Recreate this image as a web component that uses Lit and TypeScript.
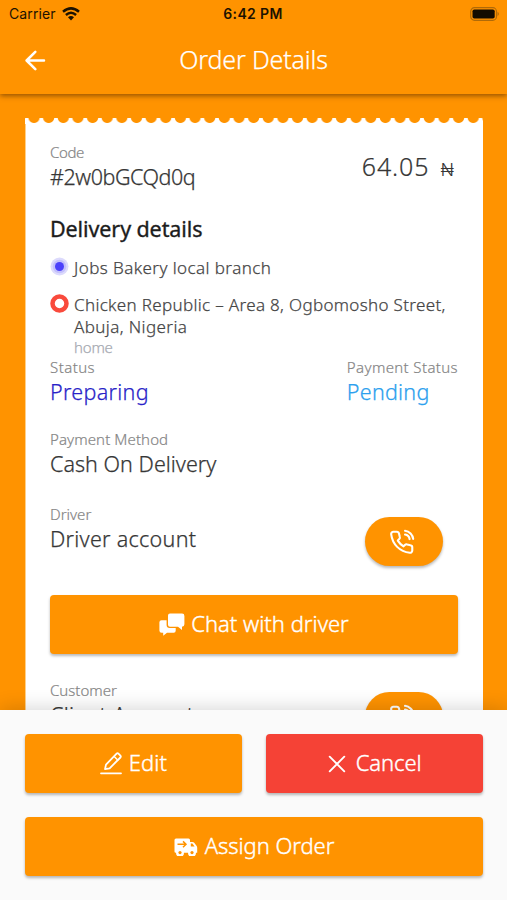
import { LitElement, html, css, nothing, type TemplateResult } from "lit";
import { customElement, property } from "lit/decorators.js";

const chatIcon = html`<svg width="26" height="23" viewBox="0 0 26 23">
  <path fill="#fff" d="M11 0.5h12q2.4 0 2.4 2.4v8.4q0 2.4-2.4 2.4v3.2l-4-3.2H11q-2 0-2-2V2.5q0-2 2-2z"/>
  <path fill="#fff" d="M7.6 7.2H2.5Q0.4 7.2 0.4 9.2v8.3q0 2.2 2.2 2.2h1.6v3l3.8-3h6.7q2 0 2-2v-2.6H10.600q-3 0-3-3z"/>
</svg>`;

const callIcon = html`<svg width="28" height="28" viewBox="0 0 24 24" fill="none" stroke="#fff" stroke-width="1.8" stroke-linecap="round" stroke-linejoin="round">
  <path d="M14.600 5.600a4.600 4.600 0 0 1 3.900 3.900M14.600 2.400a7.800 7.800 0 0 1 7 7"/>
  <path d="M20.800 16.800v2.500a1.900 1.900 0 0 1-2.100 1.900C10 20.300 3.800 14 2.700 5.300a1.900 1.900 0 0 1 1.900-2.100h2.900a1.900 1.900 0 0 1 1.900 1.600l.7 2.700a1.900 1.900 0 0 1-.45 2L8.400 10.800a15 15 0 0 0 4.900 4.900l1.200-1.200a1.900 1.900 0 0 1 2-.45l2.700.7a1.900 1.900 0 0 1 1.600 2.050z"/>
</svg>`;

const editIcon = html`<svg width="22" height="23" viewBox="0 0 22 23" fill="none" stroke="#fff" stroke-width="1.8" stroke-linecap="round" stroke-linejoin="round">
  <path d="M1 21.300h20"/>
  <path d="M5 17.200l1-4.600L16.600 1.700q.9-.9 1.800 0l2 2q.9.9 0 1.800L9.600 16.300z"/>
  <path d="M14.200 4.400l3.500 3.500" stroke-width="1.400"/>
</svg>`;

const closeIcon = html`<svg width="18" height="18" viewBox="0 0 18 18" stroke="#fff" stroke-width="1.9" stroke-linecap="round">
  <path d="M1.700 1.700l14.600 14.600M16.300 1.700L1.700 16.300"/>
</svg>`;

const truckIcon = html`<svg width="24" height="18" viewBox="0 0 24 18">
  <path fill="#fff" d="M2 0.500h12.500q1.500 0 1.500 1.500v2h2.500q1 0 1.700.8l2.300 3q.7.900.7 2v5h-1.200a4 4 0 0 1-8 0H10a4 4 0 0 1-8 0H1.800q-1.300 0-1.300-1.300V2Q0.500.5 2 .5z"/>
  <path fill="none" stroke="#ff9300" stroke-width="1.500" d="M3.500 6.300h8M9 3.400l3 2.900-3 2.900"/>
  <path fill="#ff9300" d="M16.800 5.600h1.600l2.200 3h-3.800z"/>
  <circle cx="6" cy="14.600" r="1.600" fill="#ff9300"/><circle cx="18" cy="14.600" r="1.600" fill="#ff9300"/>
</svg>`;

@customElement("status-bar")
class StatusBar extends LitElement {
  static styles = css`
    :host { display: grid; grid-template-columns: 1fr auto 1fr; align-items: center; height: 27px;
      padding: 0 7px 0 9px; font: 400 14px "Inter", sans-serif; color: #1c1200; }
    .left { display: flex; align-items: center; gap: 6px; letter-spacing: 0.1px; }
    .time { font-weight: 600; letter-spacing: 0.350px; margin-left: -3px; }
    .battery { justify-self: end; }
    svg { display: block; }
  `;
  render() {
    return html`
      <div class="left">Carrier
        <svg width="18" height="14" viewBox="0 0 18 14" fill="none" stroke="#1c1200" stroke-width="2.500">
          <path d="M1 4.800Q9-2 17 4.800"/><path d="M3.900 8Q9 3.600 14.100 8"/>
          <path d="M6 10.200Q9 7.600 12 10.200L9 13.600z" fill="#1c1200" stroke="none"/>
        </svg>
      </div>
      <div class="time">6:42 PM</div>
      <svg class="battery" width="30" height="14" viewBox="0 0 30 14">
        <rect x="0.700" y="0.700" width="25.800" height="12.600" rx="3.800" fill="none" stroke="#b06a08" stroke-width="1.200"/>
        <rect x="2.500" y="2.500" width="22.200" height="9" rx="1.800" fill="#140c00"/>
        <path d="M27.600 4.800q2.400 2.200 0 4.400z" fill="#a86408"/>
      </svg>`;
  }
}

@customElement("app-button")
class AppButton extends LitElement {
  @property() label = "";
  @property({ attribute: false }) icon: TemplateResult | typeof nothing = nothing;
  @property({ type: Boolean, reflect: true }) danger = false;
  @property({ type: Number }) gap = 6;
  @property({ type: Number }) tracking = 0;
  static styles = css`
    :host { display: flex; align-items: center; justify-content: center; height: 58.500px; border-radius: 4px;
      background: #ff9300; color: #fff; box-shadow: 0 2px 3px rgba(0, 0, 0, 0.28); white-space: nowrap; }
    :host([danger]) { background: #f54236; }
    .text { font: 300 22px/30px "Noto Sans", sans-serif; padding-bottom: 3px; -webkit-text-stroke: 0.400px currentColor; }
    svg { display: block; flex: none; margin-top: 1px; }
  `;
  render() {
    return html`${this.icon}<span class="text" style="margin-left:${this.gap}px;letter-spacing:${this.tracking}px">${this.label}</span>`;
  }
}

@customElement("call-button")
class CallButton extends LitElement {
  static styles = css`
    :host { display: flex; align-items: center; justify-content: center; width: 78px; height: 49px;
      border-radius: 25px; background: #ff9300; box-shadow: 0 2px 3px rgba(0, 0, 0, 0.28); }
    svg { display: block; margin-right: 4px; }
  `;
  render() { return callIcon; }
}

@customElement("detail-field")
class DetailField extends LitElement {
  @property() label = "";
  @property() value = "";
  @property() tone = "#363636";
  @property({ type: Number }) lt = 0;
  @property({ type: Number }) vt = 0;
  static styles = css`
    :host { display: block; font-family: "Noto Sans", sans-serif; font-weight: 300; white-space: nowrap; }
    .label { font-size: 15px; line-height: 20px; color: #858585; -webkit-text-stroke: 0.200px currentColor; }
    .value { font-size: 21.500px; line-height: 28px; -webkit-text-stroke: 0.250px currentColor; padding-top: 0.500px; margin-bottom: -0.500px; }
  `;
  render() {
    return html`
      <div class="label" style="letter-spacing:${this.lt}px">${this.label}</div>
      <div class="value" style="color:${this.tone};letter-spacing:${this.vt}px">${this.value}</div>`;
  }
}

@customElement("app-root")
class AppRoot extends LitElement {
  static styles = css`
    :host { display: flex; flex-direction: column; height: 900px; overflow: hidden; background: #ff9300;
      font-family: "Noto Sans", sans-serif; font-weight: 300; color: #363636; }
    .header { flex: none; height: 94px; background: #ff9300; box-shadow: 0 2px 5px rgba(70, 35, 0, 0.550); z-index: 1; }
    .nav { display: grid; grid-template-columns: 62px 1fr 62px; align-items: center; height: 67px; color: #fff; }
    .nav svg { display: block; margin-left: 25px; }
    .title { text-align: center; font-size: 25px; line-height: 34px; letter-spacing: -0.150px; padding-bottom: 4px;
      -webkit-text-stroke: 0.250px currentColor; }
    .content { flex: 1; min-height: 0; overflow: hidden; padding: 24px 24px 0 25px; }
    .teeth { height: 6px; background: radial-gradient(circle at 50% -0.700px, #ff9300 5.200px, #fff 6.100px) 1.700px 0 / 14.645px 6px repeat-x; }
    .card { height: 900px; background: #fff; border-left: 1px solid #ffd08a; box-sizing: border-box;
      padding: 18px 25px 0 24px; }
    .row { display: flex; justify-content: space-between; white-space: nowrap; }
    .price { display: flex; align-items: baseline; gap: 11px; font-size: 25px; line-height: 34px;
      padding: 7px 4px 0 0; letter-spacing: 0.900px; -webkit-text-stroke: 0.200px currentColor; }
    .unit { font: 350 17.500px "Inter", sans-serif; letter-spacing: 0; -webkit-text-stroke: 0; }
    .section { margin-top: 25px; font-size: 21.500px; line-height: 28px; font-weight: 400; color: #1c1c1c;
      letter-spacing: -0.100px; -webkit-text-stroke: 0.350px currentColor; }
    .stop { display: grid; grid-template-columns: 19px 1fr; column-gap: 5px; font-size: 17px; line-height: 22px;
      color: #454545; white-space: nowrap; -webkit-text-stroke: 0.250px currentColor; }
    .stop svg { display: block; }
    .first { margin-top: 14px; }
    .second { margin-top: 15px; }
    .note { font-size: 15px; line-height: 19px; color: #a6aab2; letter-spacing: -0.200px; }
    .gap { margin-top: 24px; }
    .driver { margin-top: 27px; }
    .driver call-button { margin: 13px 15px 0 0; }
    .chat { margin-top: 29px; }
    .customer { margin-top: 26.500px; }
    .customer call-button { margin: 12px 15px 0 0; }
    .footer { flex: none; height: 190px; box-sizing: border-box; padding: 24px 24px 0 25px; background: #fafafa;
      display: grid; grid-template-columns: 1fr 1fr; grid-auto-rows: 58.500px; gap: 24.500px; z-index: 1;
      box-shadow: 0 -2px 18px rgba(0, 0, 0, 0.160); }
    .wide { grid-column: 1 / 3; }
  `;
  render() {
    return html`
      <div class="header">
        <status-bar></status-bar>
        <div class="nav">
          <svg width="21" height="21" viewBox="0 0 21 21" fill="none" stroke="#fff" stroke-width="2.500" stroke-linecap="round" stroke-linejoin="round"><path d="M19 10.500H2M10.300 1.800L1.600 10.500l8.700 8.700"/></svg>
          <div class="title">Order Details</div>
        </div>
      </div>
      <div class="content">
        <div class="teeth"></div>
        <div class="card">
          <div class="row">
            <detail-field label="Code" value="#2w0bGCQd0q" .lt=${-0.4} .vt=${-0.45}></detail-field>
            <div class="price"><span>64.05</span><span class="unit">₦</span></div>
          </div>
          <div class="section">Delivery details</div>
          <div class="stop first">
            <svg width="19" height="19" viewBox="0 0 19 19"><circle cx="9.500" cy="9.500" r="9" fill="#dcdafc"/><circle cx="9.500" cy="9.500" r="6.800" fill="#c3c0fb"/><circle cx="9.500" cy="9.500" r="4.500" fill="#4b40fb"/></svg>
            <div style="letter-spacing:0.420px">Jobs Bakery local branch</div>
          </div>
          <div class="stop second">
            <svg width="19" height="19" viewBox="0 0 19 19"><circle cx="9.500" cy="9.500" r="7" fill="#fff" stroke="#f94a3c" stroke-width="4.500"/></svg>
            <div>
              <div style="letter-spacing:0.330px">Chicken Republic – Area 8, Ogbomosho Street,</div>
              <div style="letter-spacing:0.400px">Abuja, Nigeria</div>
              <div class="note">home</div>
            </div>
          </div>
          <div class="row">
            <detail-field label="Status" value="Preparing" tone="#2a1fc8" .lt=${0.45} .vt=${0.3}></detail-field>
            <detail-field label="Payment Status" value="Pending" tone="#2ca0ee" .lt=${0.37} .vt=${0.25}></detail-field>
          </div>
          <detail-field class="gap" label="Payment Method" value="Cash On Delivery" .lt=${0.1} .vt=${0.03}></detail-field>
          <div class="row driver">
            <detail-field label="Driver" value="Driver account" .vt=${0.28}></detail-field>
            <call-button></call-button>
          </div>
          <app-button class="chat" label="Chat with driver" .icon=${chatIcon} .gap=${6} .tracking=${0}></app-button>
          <div class="row customer">
            <detail-field label="Customer" value="Client Account" .vt=${0.3}></detail-field>
            <call-button></call-button>
          </div>
        </div>
      </div>
      <div class="footer">
        <app-button label="Edit" .icon=${editIcon} .gap=${7} .tracking=${0.1}></app-button>
        <app-button danger label="Cancel" .icon=${closeIcon} .gap=${10} .tracking=${-0.1}></app-button>
        <app-button class="wide" label="Assign Order" .icon=${truckIcon} .gap=${7} .tracking=${-0.05}></app-button>
      </div>`;
  }
}
